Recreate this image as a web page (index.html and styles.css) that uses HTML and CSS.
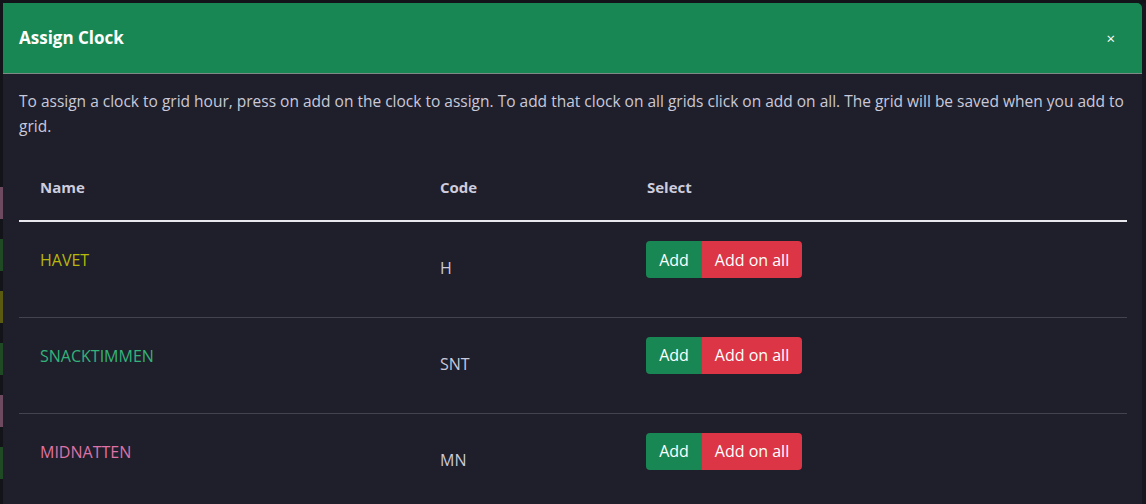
FILE: index.html
```html
<!DOCTYPE html>
<html>
<head>
<meta charset="utf-8">
<link rel="stylesheet" href="styles.css">
</head>
<body>
<div class="backdrop">
  <div class="left-strip">
    <span class="chip c1"></span><span class="chip c2"></span><span class="chip c3"></span><span class="chip c2"></span><span class="chip c1"></span><span class="chip c2"></span>
  </div>
  <div class="modal">
    <div class="modal-header">
      <h5 class="modal-title">Assign Clock</h5>
      <span class="close">×</span>
    </div>
    <div class="modal-body">
      <p class="intro">To assign a clock to grid hour, press on add on the clock to assign. To add that clock on all grids click on add on all. The grid will be saved when you add to grid.</p>
      <table class="clocks">
        <thead>
          <tr><th class="col-name">Name</th><th class="col-code">Code</th><th class="col-sel">Select</th></tr>
        </thead>
        <tbody>
          <tr>
            <td class="name yellow">HAVET</td>
            <td class="code">H</td>
            <td class="sel"><div class="btn-group"><button class="btn green">Add</button><button class="btn red">Add on all</button></div></td>
          </tr>
          <tr>
            <td class="name green-t">SNACKTIMMEN</td>
            <td class="code">SNT</td>
            <td class="sel"><div class="btn-group"><button class="btn green">Add</button><button class="btn red">Add on all</button></div></td>
          </tr>
          <tr>
            <td class="name pink">MIDNATTEN</td>
            <td class="code">MN</td>
            <td class="sel"><div class="btn-group"><button class="btn green">Add</button><button class="btn red">Add on all</button></div></td>
          </tr>
        </tbody>
      </table>
    </div>
  </div>
  <div class="right-strip"></div>
</div>
</body>
</html>
```
FILE: styles.css
```css
* { box-sizing: border-box; }
html, body { margin: 0; padding: 0; }
body {
  width: 1146px;
  height: 504px;
  overflow: hidden;
  background: #13131a;
  font-family: "Open Sans", "Noto Sans", sans-serif;
  color: #c9c9d9;
}
.backdrop {
  display: flex;
  height: 504px;
  padding-top: 3px;
}
.left-strip {
  width: 3px;
  flex: none;
  display: flex;
  flex-direction: column;
  padding-top: 184px;
  gap: 20px;
}
.chip { display: block; width: 3px; height: 32px; }
.c1 { background: #6e4a60; }
.c2 { background: #1f4a24; }
.c3 { background: #5a5a10; }
.right-strip {
  width: 4px;
  flex: none;
  background: #17171f;
}
.modal {
  width: 1139px;
  flex: none;
  background: #1f1f2c;
  border-top-right-radius: 5px;
  overflow: hidden;
}
.modal-header {
  height: 71px;
  background: #198754;
  border-bottom: 1px solid #7d8a86;
  display: flex;
  align-items: center;
  justify-content: space-between;
  padding: 0 27px 0 16px;
}
.modal-title {
  margin: 0;
  font-size: 17px;
  font-weight: 700;
  color: #fff;
  padding-bottom: 1px;
}
.close {
  color: #fff;
  font-size: 15px;
  line-height: 1;
}
.modal-body {
  padding: 15px 16px 0 16px;
}
.intro {
  margin: 0 0 40px 0;
  font-size: 15.5px;
  line-height: 25px;
  color: #c9c9d9;
}
.clocks {
  width: 1108px;
  border-collapse: collapse;
}
.clocks th {
  text-align: left;
  font-size: 15px;
  line-height: 17px;
  font-weight: 700;
  color: #cdcddd;
  padding: 0 21px;
  height: 42px;
  vertical-align: top;
  border-bottom: 2px solid #e8e8ee;
}
.col-name { width: 400px; }
.col-code { width: 207px; }
.clocks td {
  height: 96px;
  vertical-align: top;
  padding: 0 21px;
  font-size: 16px;
  line-height: 18px;
  border-bottom: 1px solid #43434d;
}
.clocks tbody tr:last-child td { border-bottom: none; }
.name { padding-top: 29px !important; }
.code { padding-top: 37px !important; color: #c9c9d9; }
.sel { padding-top: 19px !important; padding-left: 20px !important; }
.yellow { color: #b7b70c; }
.green-t { color: #33b27a; }
.pink { color: #dd72a6; }
.btn-group { display: inline-flex; }
.btn {
  border: none;
  height: 37px;
  font-family: inherit;
  font-size: 16px;
  color: #fff;
  padding: 0;
  margin: 0;
}
.btn.green { background: #198754; border-radius: 4px 0 0 4px; width: 56px; }
.btn.red { background: #dc3545; border-radius: 0 4px 4px 0; width: 100px; }
```
